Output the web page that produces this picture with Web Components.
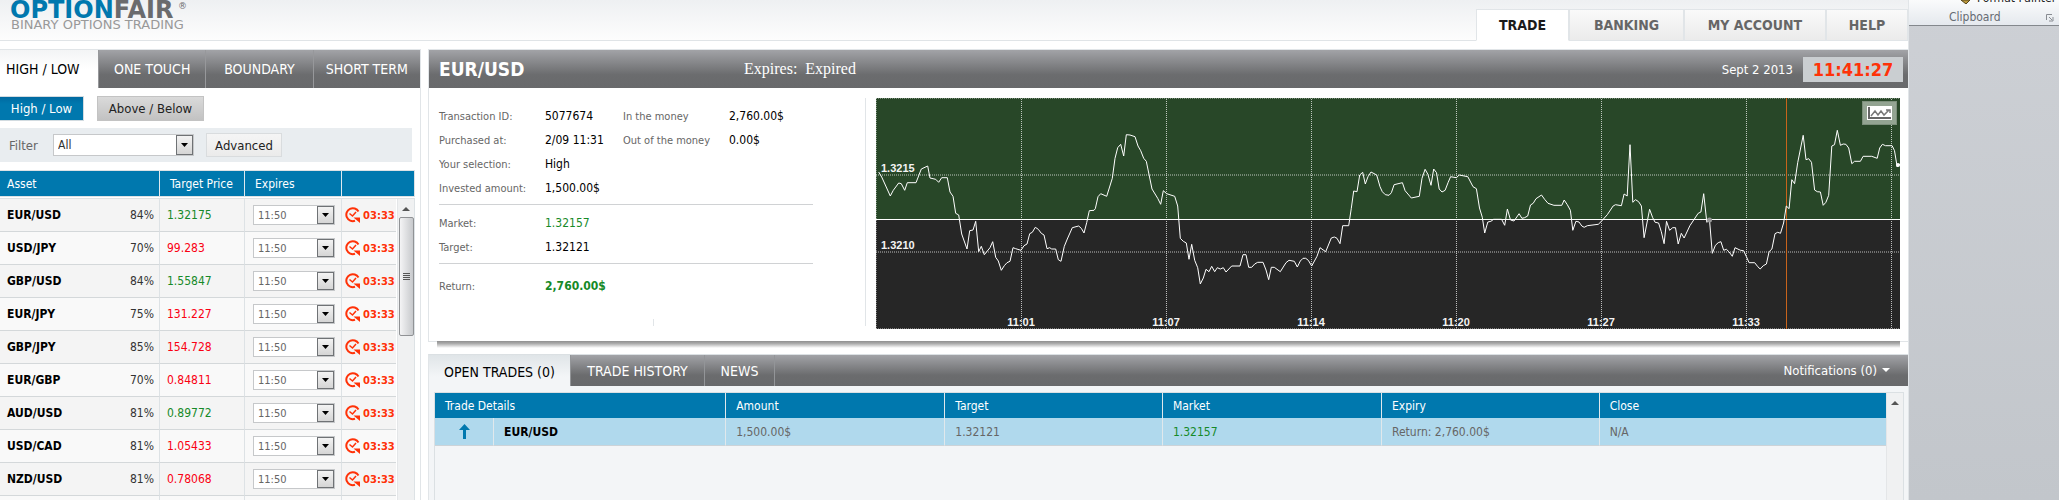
<!DOCTYPE html>
<html lang="en"><head><meta charset="utf-8"><title>OptionFair</title>
<style>
html,body{height:100%}
body{margin:0;overflow:hidden;background:#fff;font:12px "DejaVu Sans Condensed","Open Sans",sans-serif;color:#000}
</style></head><body>
<trading-app></trading-app>
<script>
const define=(name,html,init)=>customElements.define(name,class extends HTMLElement{
  connectedCallback(){
    if(this.shadowRoot)return;
    const t=document.createElement('template');
    t.innerHTML='<style>*{box-sizing:border-box}'+(typeof html==='function'?html(this):html);
    this.attachShadow({mode:'open'}).append(t.content.cloneNode(true));
    if(init)init(this.shadowRoot,this);
  }
});

define('trading-app',`
:host{display:flex;height:100vh;overflow:hidden}
.site{flex:1;min-width:0;display:flex;flex-direction:column;border-right:1px solid #e1e5e8}
.cols{flex:1;min-height:0;display:flex;gap:7px;padding-top:8px}
asset-panel{flex:0 0 421px}
main{flex:1;min-width:0;display:flex;flex-direction:column;gap:12px}
trade-history{flex:1;min-height:0}
office-side{flex:0 0 150px}
</style>
<div class="site"><site-header></site-header>
<div class="cols"><asset-panel></asset-panel><main><position-panel></position-panel><trade-history></trade-history></main></div></div>
<office-side></office-side>`);

define('site-header',`
:host{display:flex;justify-content:space-between;align-items:flex-end;height:41px;background:linear-gradient(#eef0f2,#fdfdfd);border-bottom:1px solid #e0e4e7}
svg{display:block;align-self:flex-start;margin-left:10px}
nav{display:flex;height:32px;margin-bottom:-1px}
a{display:flex;align-items:center;justify-content:center;font-weight:bold;font-size:14px;color:#666;text-decoration:none;background:linear-gradient(#fafafa,#ebebeb);border:1px solid #e1e5e8}
a.on{background:#fff;color:#1a1a1a;border-bottom-color:#fff}
</style>
<svg width="190" height="34" role="img" aria-label="OptionFair Binary Options Trading" font-family="DejaVu Sans,sans-serif">
<text x="0" y="18" font-size="24" font-weight="bold" fill="#0078ae">OPTION<tspan fill="#6a6b6d">FAIR</tspan></text>
<text x="168" y="9" font-size="9" fill="#6a6b6d">®</text>
<text x="1" y="29" font-size="13" fill="#999">BINARY OPTIONS TRADING</text></svg>
<nav><a class="on" href="#trade" style="width:93px">TRADE</a><a href="#banking" style="width:115px">BANKING</a><a href="#account" style="width:142px">MY ACCOUNT</a><a href="#help" style="width:82px">HELP</a></nav>`);

const barBg='linear-gradient(#a2a3a7,#6b6c6e 65%,#68696b)';
define('drop-down',e=>`
:host{display:block;position:relative;height:20px;font-size:11px;color:#666}
select{appearance:none;display:block;width:100%;height:100%;margin:0;border:1px solid #c6c8ca;border-radius:0;background:#fff;padding:0 18px 0 4px;font:inherit;color:inherit}
svg{position:absolute;right:1px;top:1px;width:17px;height:calc(100% - 2px);pointer-events:none;background:linear-gradient(#f3f3f3,#d5d5d5);border:1px solid #6f7275}
</style><select aria-label="${e.getAttribute('label')}"><option>${e.getAttribute('value')}</option></select>
<svg viewBox="0 0 15 16"><path d="M4 6h7l-3.5 4z" fill="#000"/></svg>`);

define('scroll-bar',e=>`
:host{display:flex;flex-direction:column;align-items:center;width:17px;background:#f0f1f2;border-left:1px solid #e4e6e8}
.up{flex:0 0 18px;display:flex;align-items:center;justify-content:center}
.thumb{width:15px;height:119px;border:1px solid #909295;border-radius:2px;background:linear-gradient(90deg,#f4f4f5,#c7c9cc);display:flex;align-items:center;justify-content:center}
</style><div class="up"><svg width="8" height="6"><path d="M0 6l4-4 4 4z" fill="#555"/></svg></div>
${e.hasAttribute('thumb')?'<div class="thumb"><svg width="7" height="9" stroke="#555"><path d="M0 1.5h7M0 3.5h7M0 5.5h7M0 7.5h7"/></svg></div>':''}`);

const assets=[['EUR/USD',84,'1.32175',1],['USD/JPY',70,'99.283',0],['GBP/USD',84,'1.55847',1],['EUR/JPY',75,'131.227',0],['GBP/JPY',85,'154.728',0],['EUR/GBP',70,'0.84811',0],['AUD/USD',81,'0.89772',1],['USD/CAD',81,'1.05433',0],['NZD/USD',81,'0.78068',0]];
define('asset-panel',`
:host{display:flex;flex-direction:column;border-top:1px solid #e1e5e8;border-right:1px solid #e1e5e8;overflow:hidden}
button{font:inherit;cursor:pointer;padding:0;margin:0;border-radius:0}
.tabs{display:flex;height:38px;flex:none;background:${barBg}}
.tabs button{flex:1;border:0;border-left:1px solid #97989b;background:none;color:#fff;font-size:14px}
.tabs button.on{flex:0 0 98px;text-align:left;padding-left:6px;border:0;background:linear-gradient(#f3f4f5,#fff 50%);color:#000}
.sub{display:flex;gap:13px;padding:8px 0 7px;flex:none;font-size:13px}
.sub button{height:25px;width:84px;border:1px solid #d2dbe0;border-left:0;background:linear-gradient(#0069a0,#0078ae 30%);color:#fff}
.sub button+button{width:107px;border:1px solid #c3c3c3;background:linear-gradient(#dadada,#c2c2c2);color:#222}
.filter{display:flex;align-items:center;height:34px;width:412px;flex:none;background:#e9edf0;padding-left:9px;color:#666;font-size:13px}
.filter label{width:44px}
.filter drop-down{width:141px;height:22px;font-size:12px;color:#333;margin-right:12px}
.filter button{width:76px;height:24px;border:1px solid #d9dcde;background:linear-gradient(#f5f5f5,#ebebeb);color:#222}
table{border-collapse:separate;border-spacing:0;table-layout:fixed}
.head{flex:none;margin-top:8px;width:415px;border:1px solid #dde2e5;border-left:0}
.head th{height:25px;background:#0078ae;color:#fff;font-weight:normal;text-align:left;padding:0 0 0 10px;border-left:1px solid #dfe9ef}
.head th:first-child,td:first-child{border-left:0;padding-left:7px}
.list{display:flex;flex:none;width:415px;margin-top:1px;border-top:1px solid #dde2e5;border-right:1px solid #dde2e5}
.list table{width:397px;margin-right:1px}
td{height:33px;padding:0;border-bottom:1px solid #d4d8da;border-left:1px solid #dde2e5;background:#f4f4f4}
tr:nth-child(even) td{background:#f9f9f9}
.a{display:flex;justify-content:space-between;padding-right:5px;color:#333}
.a b{color:#000}
td.p{padding-left:7px;color:#fa0012}td.p.up{color:#168a28}
td drop-down{width:82px;margin-left:8px}
.t{display:flex;align-items:center;gap:3px;padding-left:3px;font:bold 10px "DejaVu Sans",sans-serif;color:#ff3208}
.t svg{flex:none}
</style>
<div class="tabs"><button class="on">HIGH / LOW</button><button>ONE TOUCH</button><button>BOUNDARY</button><button>SHORT TERM</button></div>
<div class="sub"><button>High / Low</button><button>Above / Below</button></div>
<div class="filter"><label>Filter</label><drop-down label="Filter" value="All"></drop-down><button>Advanced</button></div>
<table class="head"><colgroup><col style="width:159px"><col style="width:85px"><col style="width:97px"><col></colgroup><tr><th>Asset</th><th>Target Price</th><th>Expires</th><th></th></tr></table>
<div class="list"><table><colgroup><col style="width:159px"><col style="width:85px"><col style="width:97px"><col></colgroup><tbody>${assets.map(r=>`<tr><td><div class="a"><b>${r[0]}</b><span>${r[1]}%</span></div></td><td class="p ${r[3]?'up':''}">${r[2]}</td><td><drop-down label="${r[0]} expiry" value="11:50"></drop-down></td><td><div class="t"><svg width="15" height="16" viewBox="0 0 15 16" fill="none" stroke="#ff3208"><path d="M13.500 4.500A6.500 6.500 0 1 0 10 13.800" stroke-width="2"/><path d="M4.500 6.500l3 2.500 3.500-4" stroke-width="1.500"/><path d="M8.500 10.500H15V16z" fill="#ff3208" stroke="none"/></svg>03:33</div></td></tr>`).join('')}<tr><td></td><td></td><td></td><td></td></tr></tbody></table><scroll-bar thumb></scroll-bar></div>`);

define('position-panel',`
:host{display:block;position:relative;border:1px solid #e1e5e8;border-right:0;background:#fff}
:host::after{content:"";position:absolute;left:8px;right:8px;top:100%;height:7px;background:linear-gradient(#8f8f8f,#aaa 35%,#fff)}
header{display:flex;align-items:center;height:38px;padding:0 5px 0 10px;background:${barBg};color:#fff;font-size:13px}
h1{margin:0;font-size:19px;width:305px}
.exp{font:16px "Liberation Serif",serif;white-space:pre;flex:1}
time{display:flex;align-items:center;justify-content:center;margin-left:10px;width:100px;height:25px;background:#caced1;color:#ff3208;font-weight:bold;font-size:18px}
.body{display:flex;padding:10px 8px 12px}
.info{flex:0 0 429px;height:228px;padding:6px 0 0 2px;border-right:1px solid #e1e5e8;margin-right:10px;position:relative}
.info::after{content:"";position:absolute;left:216px;bottom:0;height:7px;border-left:1px solid #e1e5e8}
dl{display:grid;grid-template-columns:106px 78px 106px 1fr;grid-auto-rows:24px;align-items:center;margin:0}
dt{font-size:11px;color:#666}dd{margin:0}dd.v{grid-column:2/5}
hr{width:374px;margin:4px 0 6px;border:0;border-top:1px solid #d0d2d4}
.g{color:#168a28}
price-chart{flex:1;min-width:0}
</style>
<header><h1>EUR/USD</h1><span class="exp">Expires:  Expired</span><span>Sept 2 2013</span><time>11:41:27</time></header>
<div class="body"><div class="info">
<dl><dt>Transaction ID:</dt><dd>5077674</dd><dt>In the money</dt><dd>2,760.00$</dd><dt>Purchased at:</dt><dd>2/09 11:31</dd><dt>Out of the money</dt><dd>0.00$</dd><dt>Your selection:</dt><dd class="v">High</dd><dt>Invested amount:</dt><dd class="v">1,500.00$</dd></dl><hr>
<dl><dt>Market:</dt><dd class="v g">1.32157</dd><dt>Target:</dt><dd class="v">1.32121</dd></dl><hr style="margin-bottom:10px">
<dl><dt>Return:</dt><dd class="v g"><b>2,760.00$</b></dd></dl></div>
<price-chart></price-chart></div>`);

/* Samples of the session, first and second half on their own scales */
const early='26,276 35,291 61,348 70,331 86,309 94,311 104,331 112,308 138,308 154,267 173,258 180,294 197,298 206,307 215,293 232,293 240,336 249,349 257,400 266,405 275,462 291,507 299,452 309,450 317,424 326,515 334,499 343,524 360,503 368,485 377,532 385,543 394,571 403,557 411,548 420,544 429,503 437,506 453,511 462,497 471,492 479,461 487,457 496,442 505,448 514,460 522,465 531,506 539,503 545,507 557,507 565,539 573,544 583,499 592,477 607,443 618,440 626,438 634,445 642,459 650,428 658,392 672,391 676,386 684,350 692,341 710,349 727,295 735,235 743,203 752,193 761,228 769,164 780,165 795,170 804,198 812,212 821,235 829,244 846,327 863,355 872,373 880,332 890,341 914,349 923,378 931,475 940,484 949,489 957,538 965,493 974,541 983,563 991,612 1000,594 1008,568 1017,575 1025,559 1034,575 1042,563 1051,567 1060,563 1068,576 1085,558 1110,558 1119,524 1128,524 1136,562 1145,562 1154,552 1163,547 1179,547 1188,570 1196,599 1204,562 1213,562 1231,575 1248,548 1257,541 1273,544 1282,561 1291,543 1299,535 1307,535 1315,541 1325,558 1341,529 1350,503 1367,515 1384,474 1393,471 1401,475 1410,491 1418,437 1436,437 1444,385 1451,333 1461,335 1469,285 1478,277 1486,312 1494,290 1503,276 1520,285 1530,320 1537,335 1546,344';
const late='26,346 33,338 41,314 65,308 73,332 91,354 114,349 122,295 131,268 139,283 148,316 156,267 164,278 172,327 180,336 189,331 198,307 205,290 222,293 230,285 255,290 270,320 280,326 289,384 297,412 304,459 313,426 322,424 330,418 353,418 362,436 370,387 379,420 389,423 404,401 412,415 420,413 429,408 437,375 445,370 453,356 469,345 478,358 488,370 505,376 528,376 535,360 544,374 553,391 560,451 569,424 578,426 586,438 593,442 602,437 634,433 643,424 660,404 677,378 684,374 701,377 709,342 718,348 726,194 734,367 742,359 751,365 759,378 767,473 783,388 792,413 799,427 809,429 817,455 825,491 832,424 841,451 850,443 858,443 866,492 875,460 883,474 900,437 924,400 932,396 940,341 949,427 957,420 965,520 974,496 982,488 990,485 998,511 1006,508 1014,516 1023,529 1031,503 1047,511 1056,512 1064,530 1072,548 1088,548 1097,560 1104,567 1113,557 1122,552 1130,515 1138,507 1147,461 1155,457 1163,460 1172,429 1180,378 1188,386 1196,299 1204,311 1213,248 1229,166 1237,239 1245,236 1253,247 1262,330 1270,335 1279,336 1287,376 1295,367 1303,346 1312,198 1320,194 1328,151 1337,196 1345,192 1353,193 1361,204 1370,251 1378,244 1395,244 1403,229 1428,229 1444,235 1451,204 1459,193 1468,197 1487,197 1494,212 1502,261 1510,252';
const conv=(s,k,dx)=>s.split(' ').map(p=>{const[x,y]=p.split(',');return (x/k+dx).toFixed(1)+','+(y/3-18).toFixed(1)}).join(' ');
const pts=conv(early,3,-6)+' '+conv(late,2.904,504);
const vx=[[145,'11:01'],[290,'11:07'],[435,'11:14'],[580,'11:20'],[725,'11:27'],[870,'11:33'],[1015,'']];
define('price-chart',`
:host{display:block;position:relative;height:231px;background:#262626;font:bold 11px "Liberation Sans",sans-serif;color:#f4f4f4;overflow:hidden}
.plot{display:block;width:100%;height:100%}
.plot *{vector-effect:non-scaling-stroke}
.x{position:absolute;bottom:1px;transform:translateX(-50%)}
.y{position:absolute;left:5px}
button{position:absolute;right:3px;top:3px;width:35px;height:24px;padding:0;border:1px solid #7c8f7b;background:#93a492;display:flex;align-items:center;justify-content:center}
</style>
<svg class="plot" viewBox="0 0 1024 231" preserveAspectRatio="none" fill="none">
<path fill="#284728" d="M0 0h1024v121H0z"/>
<path d="M0 77h1024M0 154h1024" stroke="#fff" stroke-opacity=".35" stroke-width="2" stroke-dasharray="1 1"/>
<path d="${vx.map(v=>`M${v[0]+.5} 1V231`).join('')}" stroke="#fff" stroke-opacity=".7" stroke-dasharray="1 1"/>
<path d="M.5 0V231M0 .5H1024M0 230.500H1024" stroke="#fff" stroke-opacity=".4" stroke-dasharray="1 1"/>
<path d="M910.500 0V231" stroke="#c8641c"/>
<path d="M0 121.500H1024" stroke="#fff"/>
<polyline points="${pts}" stroke="#fff" stroke-width="1" stroke-linejoin="round"/>
<circle cx="833.500" cy="122" r="2.500" fill="#999"/><circle cx="1022" cy="67" r="2" fill="#fff"/>
</svg>
<span class="y" style="top:64px">1.3215</span><span class="y" style="top:141px">1.3210</span>
${vx.filter(v=>v[1]).map(v=>`<span class="x" style="left:${v[0]/10.24}%">${v[1]}</span>`).join('')}
<button aria-label="Chart type"><svg width="25" height="14"><rect width="25" height="14" fill="#fff"/><path d="M2 1v11h22" fill="none" stroke="#666" stroke-width="2"/><path d="M4 10l4-5 3 4 3-4 3 4 5-5M19 4h4v3" fill="none" stroke="#777" stroke-width="1.500"/></svg></button>`);

define('trade-history',`
:host{display:flex;flex-direction:column;border-top:1px solid #dbe0e3;border-left:1px solid #e1e5e8;background:#f3f5f7}
.bar{display:flex;flex:none;height:31px;background:${barBg};color:#fff}
button{font:inherit;padding:0;border:0;border-right:1px solid #939598;background:none;color:#fff;font-size:14px}
button.on{background:linear-gradient(#e0e5e8,#f3f5f7 70%);color:#000;padding-top:3px}
button.note{margin-left:auto;margin-right:18px;display:flex;align-items:center;gap:5px;border:0;font-size:13px}
.box{flex:1;display:flex;align-items:stretch;margin:6px 4px 0 5px;border:1px solid #dbe0e3;border-bottom:0}
.w{flex:1;min-width:0}
table{width:100%;border-spacing:0;table-layout:fixed}
th,td{padding:0 0 0 10px;text-align:left;border-left:1px solid #e0e8ec}
th{height:25px;background:#0078ae;color:#fff;font-weight:normal}
td{height:28px;background:#b0d9ed;border-bottom:1px solid #ccd3d8;color:#666}
th:first-child,td:first-child{border-left:0}
td:first-child{padding:0;text-align:center}
svg{display:block;margin:auto}
.note svg{margin:0}
td b{color:#000}td.g{color:#168a28}
</style>
<div class="bar"><button class="on" style="width:142px">OPEN TRADES (0)</button><button style="width:134px">TRADE HISTORY</button><button style="width:70px">NEWS</button><button class="note">Notifications (0) <svg width="8" height="5"><path d="M0 0h8L4 4z" fill="#fff"/></svg></button></div>
<div class="box"><div class="w"><table><colgroup><col style="width:4%"><col style="width:16%"><col style="width:15.1%"><col style="width:15%"><col style="width:15.1%"><col style="width:15%"><col></colgroup>
<tr><th colspan="2">Trade Details</th><th>Amount</th><th>Target</th><th>Market</th><th>Expiry</th><th>Close</th></tr>
<tr><td><svg width="11" height="15"><path d="M5.500 0L11 6H7v9H4V6H0z" fill="#0078ae"/></svg></td><td><b>EUR/USD</b></td><td>1,500.00$</td><td>1.32121</td><td class="g">1.32157</td><td>Return: 2,760.00$</td><td>N/A</td></tr></table></div><scroll-bar></scroll-bar></div>`);

define('office-side',`
:host{display:flex;flex-direction:column;background:linear-gradient(#cdd0d5,#c2c6cb)}
.rib{position:relative;height:26px;overflow:hidden;background:linear-gradient(#fafbfc,#e5e9ee);border-bottom:1px solid #84888d;display:flex;align-items:center;padding:9px 0 0 40px;color:#666b73;font-size:12px}
.fp{position:absolute;left:68px;top:-9px;color:#222}
svg{position:absolute}
</style><div class="rib"><span class="fp">Format Painter</span><svg style="left:52px;top:0" width="9" height="4"><path d="M0 0h9L5 4z" fill="#b9963a" stroke="#54451c"/></svg>Clipboard<svg style="right:5px;top:14px" width="8" height="8" fill="none" stroke="#888c92"><path d="M.5 6V.5H6M3 3l3 3M7 3v4H3"/></svg></div>`);
</script></body></html>
